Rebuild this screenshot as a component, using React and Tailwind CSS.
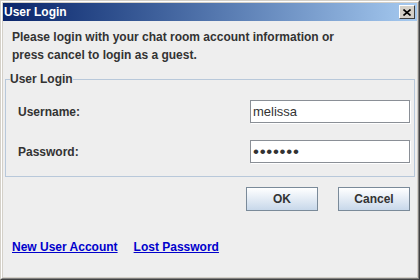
export default function App() {
  const font = { fontFamily: '"Liberation Sans", Arial, sans-serif' };

  return (
    <div
      className="w-[420px] h-[280px] border border-t-[#d4d0c8] border-l-[#d4d0c8] border-r-[#404040] border-b-[#404040]"
      style={font}
    >
      <div className="h-full flex flex-col border border-t-white border-l-white border-r-[#808080] border-b-[#808080] bg-[#d4d0c8] p-[1px]">
        {/* title bar */}
        <div className="h-[18px] flex items-center justify-between bg-gradient-to-r from-[#0a246a] to-[#a6caf0]">
          <span className="pl-[1px] text-white font-bold text-[12px] leading-none">User Login</span>
          <button className="mr-[2px] w-[16px] h-[14px] flex items-center justify-center bg-[#d4d0c8] border border-t-white border-l-white border-r-[#404040] border-b-[#404040]">
            <svg width="8" height="7" viewBox="0 0 8 7">
              <path d="M0.5 0.5 L7.5 6.5 M7.5 0.5 L0.5 6.5" stroke="#000" strokeWidth="1.6" />
            </svg>
          </button>
        </div>

        {/* content */}
        <div className="flex-1 bg-[#eeeeee] flex flex-col">
          <p className="pt-[7px] pl-[9px] text-[12px] leading-[18px] font-bold text-[#333333]">
            Please login with your chat room account information or
            <br />
            press cancel to login as a guest.
          </p>

          <fieldset className="mt-[8px] mx-[2px] border border-[#b8c8da] px-0 pb-[13px]">
            <legend className="ml-[4px] px-0 text-[12px] leading-[14px] font-bold text-[#333333]">
              User Login
            </legend>
            <div className="mt-[14px] flex items-center justify-between pl-[12px] pr-[4px]">
              <label className="text-[12px] font-bold text-[#333333]">Username:</label>
              <div className="w-[160px] h-[23px] flex items-center bg-white border border-[#8a8f96] shadow-[1px_1px_0_#ffffff]">
                <span className="pl-[2px] text-[13px] text-[#333333]">melissa</span>
              </div>
            </div>
            <div className="mt-[17px] flex items-center justify-between pl-[12px] pr-[4px]">
              <label className="text-[12px] font-bold text-[#333333]">Password:</label>
              <div className="w-[160px] h-[23px] flex items-center bg-white border border-[#8a8f96] shadow-[1px_1px_0_#ffffff]">
                <span className="pl-[2px] text-[17px] leading-none tracking-[0.7px] text-[#333333]">•••••••</span>
              </div>
            </div>
          </fieldset>

          <div className="mt-[10px] flex justify-end gap-[20px] pr-[7px]">
            <button className="w-[72px] h-[24px] border border-[#7a8a99] bg-gradient-to-b from-white to-[#c8d8ea] text-[12px] font-bold text-[#333333]">
              OK
            </button>
            <button className="w-[72px] h-[24px] border border-[#7a8a99] bg-gradient-to-b from-white to-[#c8d8ea] text-[12px] font-bold text-[#333333]">
              Cancel
            </button>
          </div>

          <div className="mt-[29px] pl-[9px] flex gap-[16px] text-[12px] leading-[14px] font-bold">
            <a className="text-[#0000cc] underline">New User Account</a>
            <a className="text-[#0000cc] underline">Lost Password</a>
          </div>
        </div>
      </div>
    </div>
  );
}
